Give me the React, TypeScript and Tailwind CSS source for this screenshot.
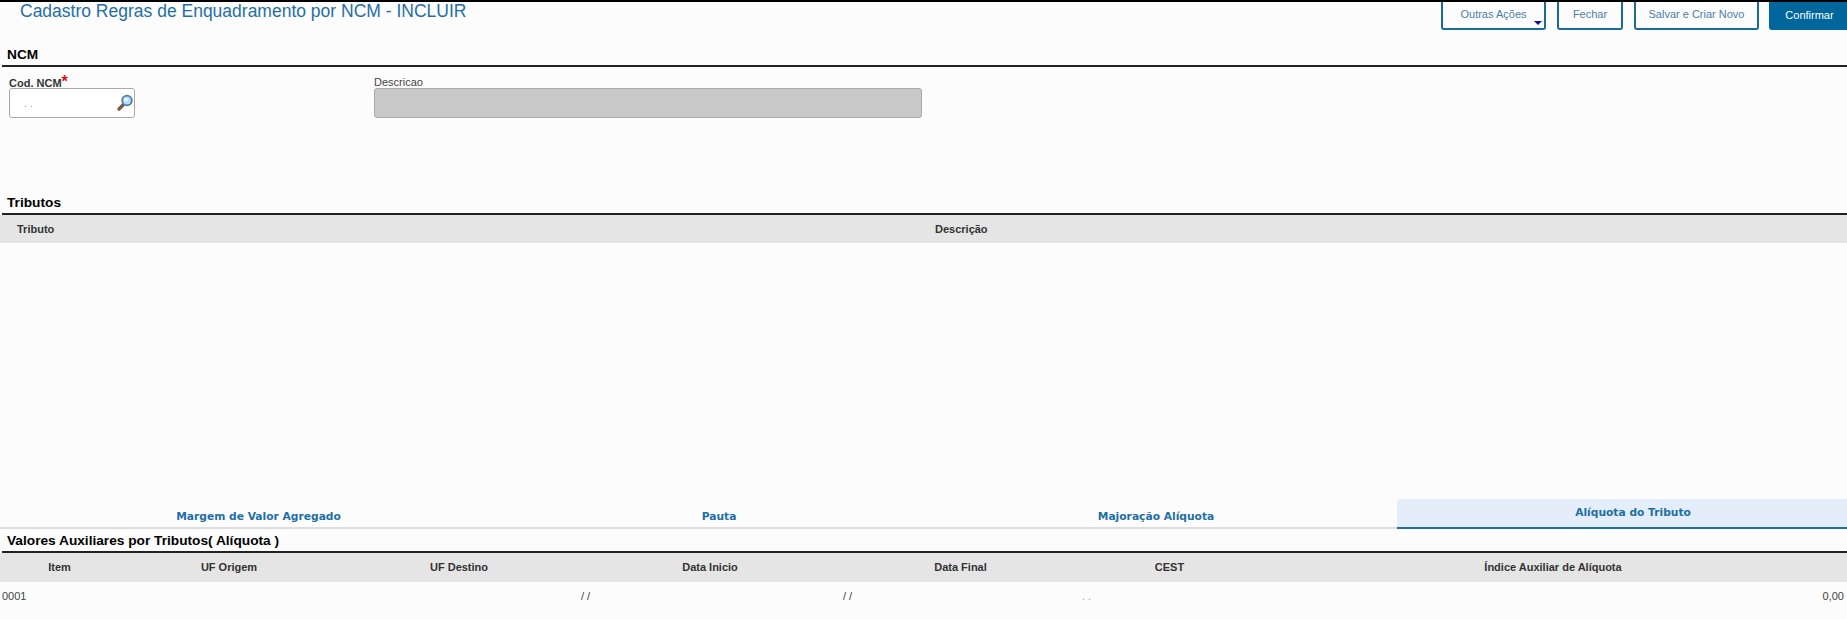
const arial = "font-['Liberation_Sans',Arial,sans-serif]";

function SectionTitle({ children, className }: { children: React.ReactNode; className: string }) {
  return (
    <div className={"flex items-end border-b-2 border-[#222] ml-[2px] pl-[5px] font-bold text-[13.7px] leading-none text-black " + className}>
      <span className="pb-[3px]">{children}</span>
    </div>
  );
}

function Magnifier() {
  return (
    <svg width="18" height="18" viewBox="0 0 18 18" className="shrink-0">
      <path d="M7 11 L3 15" stroke="#7a5a45" strokeWidth="3.4" strokeLinecap="round" />
      <circle cx="11" cy="6.5" r="4.8" fill="#bcdcf5" stroke="#4a7da3" strokeWidth="1.8" />
      <circle cx="10" cy="5.5" r="1.8" fill="#eef7ff" />
    </svg>
  );
}

const GRID = "grid grid-cols-[119px_220px_240px_262px_239px_179px_1fr]";

export default function App() {
  return (
    <div className={"w-[1847px] h-[619px] overflow-hidden bg-[#fcfcfc] border-t-2 border-black " + arial}>
      {/* title + actions */}
      <div className="flex justify-between h-[28px]">
        <h1 className="pl-[20px] text-[17.5px] leading-[20px] -mt-[1px] text-[#1f6fa5]">
          Cadastro Regras de Enquadramento por NCM - INCLUIR
        </h1>
        <div className="flex gap-[11px] text-[11px] -mt-[2px]">
          <button type="button" className="relative w-[105px] h-[30px] border-2 border-t-0 border-[#1a6a9a] rounded-b-[3px] text-[#4d7ea8]">
            Outras Ações
            <span className="absolute right-[2px] bottom-[3px] w-0 h-0 border-x-[4px] border-x-transparent border-t-[4px] border-t-[#10109a]" />
          </button>
          <button type="button" className="w-[66px] h-[30px] border-2 border-t-0 border-[#1a6a9a] rounded-b-[3px] text-[#4d7ea8]">
            Fechar
          </button>
          <button type="button" className="w-[125px] h-[30px] border-2 border-t-0 border-[#1a6a9a] rounded-b-[3px] text-[#4d7ea8]">
            Salvar e Criar Novo
          </button>
          <button type="button" className="w-[78px] h-[30px] -ml-[1px] bg-[#00669b] rounded-bl-[3px] text-white pl-[3px]">
            Confirmar
          </button>
        </div>
      </div>

      <SectionTitle className="h-[37px]">NCM</SectionTitle>

      {/* form */}
      <div className="flex h-[109px] pt-[9px] pl-[9px]">
        <div className="w-[365px]">
          <div className="h-[13px] text-[11px] leading-[13px] font-bold text-[#333] translate-y-[1px]">
            Cod. NCM<span className="text-[#e01010] text-[16px] leading-[10px]">*</span>
          </div>
          <div className="-mt-[1px] w-[126px] h-[30px] flex items-center justify-between bg-white border border-[#aaa] rounded-[3px] pl-[14px]">
            <span className="text-[11px] text-[#999]">. .</span>
            <Magnifier />
          </div>
        </div>
        <div>
          <div className="h-[13px] text-[11px] leading-[13px] text-[#444]">Descricao</div>
          <div className="-mt-[1px] w-[548px] h-[30px] bg-[#c9c9c9] border border-[#aaa] rounded-[3px]" />
        </div>
      </div>

      <SectionTitle className="h-[39px]">Tributos</SectionTitle>

      {/* tributos table */}
      <div className="flex items-center h-[28px] pt-[1px] bg-[#e5e5e5] text-[11px] font-bold text-[#333]">
        <span className="w-[935px] pl-[17px]">Tributo</span>
        <span>Descrição</span>
      </div>
      <div className="h-[255px]" />

      {/* tabs */}
      <div className="grid grid-cols-[517px_404px_476px_1fr] h-[31px] font-['DejaVu_Sans',sans-serif] text-[10.7px] font-bold text-[#1f6fa5] border-b-2 border-[#ddd]">
        <div className="flex items-end justify-center pb-[2px]">Margem de Valor Agregado</div>
        <div className="flex items-end justify-center pb-[2px]">Pauta</div>
        <div className="flex items-end justify-center pb-[2px] pr-[6px]">Majoração Alíquota</div>
        <div className="flex items-center justify-center mt-[1px] pl-[22px] bg-[#e3eefa] rounded-tl-[3px] border-b-2 border-[#1f6fa5] -mb-[2px]">Alíquota do Tributo</div>
      </div>

      <SectionTitle className="h-[24px]">Valores Auxiliares por Tributos( Alíquota )</SectionTitle>

      {/* valores table */}
      <div className={GRID + " h-[29px] items-center text-center bg-[#e5e5e5] text-[11px] font-bold text-[#333]"}>
        <span>Item</span>
        <span>UF Origem</span>
        <span>UF Destino</span>
        <span>Data Inicio</span>
        <span>Data Final</span>
        <span>CEST</span>
        <span>Índice Auxiliar de Alíquota</span>
      </div>
      <div className={GRID + " h-[29px] items-center text-[11px] text-[#444]"}>
        <span className="pl-[2px]">0001</span>
        <span />
        <span />
        <span className="pl-[2px]">/ /</span>
        <span className="pl-[2px]">/ /</span>
        <span className="pl-[2px] text-[#999]">. .</span>
        <span className="text-right pr-[3px]">0,00</span>
      </div>
    </div>
  );
}
